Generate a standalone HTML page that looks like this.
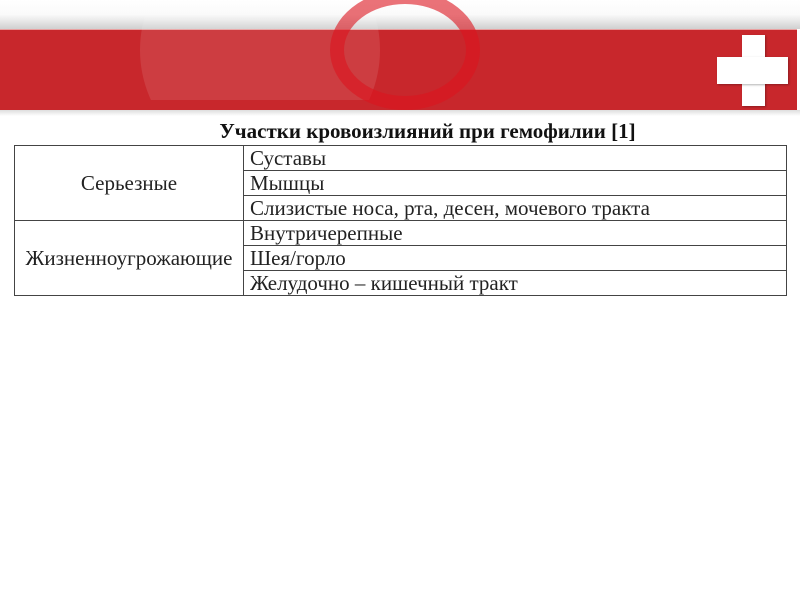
<!DOCTYPE html>
<html><head><meta charset="utf-8"><style>
body{margin:0;width:800px;height:600px;background:#fff;position:relative;overflow:hidden;font-family:"Liberation Serif",serif;}
.top{position:absolute;left:0;top:0;width:800px;height:29px;background:linear-gradient(#fff 0,#fafafa 50%,#d0d0d0 100%);}
.band{position:absolute;left:0;top:29px;width:797px;height:81px;background:#c8272c;border-top:1px solid #e9a0a0;}
.shade{position:absolute;left:0;top:110px;width:800px;height:6px;background:linear-gradient(#ddd,#fff);}
.gauge{position:absolute;left:140px;top:-70px;width:240px;height:240px;border-radius:50%;background:rgba(255,255,255,0.1);clip-path:inset(0 0 70px 0);}
.ring{position:absolute;left:330px;top:-10px;width:150px;height:120px;border-radius:50%;border:14px solid rgba(220,20,30,0.6);box-sizing:border-box;}
.cv{position:absolute;left:742px;top:35px;width:23px;height:71px;background:#fff;box-shadow:1px 1px 2px rgba(0,0,0,.3);}
.ch{position:absolute;left:717px;top:57px;width:71px;height:27px;background:#fff;box-shadow:1px 1px 2px rgba(0,0,0,.3);}
.title{position:absolute;left:0;width:855px;top:119px;text-align:center;font-weight:bold;font-size:21px;color:#111;white-space:nowrap;}
table{position:absolute;left:14px;top:145px;width:773px;border-collapse:collapse;font-size:21px;color:#222;}
td{border:1px solid #444;height:24px;padding:0 0 0 6px;line-height:20px;white-space:nowrap;}
td.l{width:228px;text-align:center;padding:0;}
</style></head><body>
<div class="top"></div>
<div class="band"></div>
<div class="gauge"></div>
<div class="ring"></div>
<div class="shade"></div>
<div class="cv"></div><div class="ch"></div>
<div class="title">Участки кровоизлияний при гемофилии [1]</div>
<table>
<tr><td class="l" rowspan="3">Серьезные</td><td>Суставы</td></tr>
<tr><td>Мышцы</td></tr>
<tr><td>Слизистые носа, рта, десен, мочевого тракта</td></tr>
<tr><td class="l" rowspan="3">Жизненноугрожающие</td><td>Внутричерепные</td></tr>
<tr><td>Шея/горло</td></tr>
<tr><td>Желудочно – кишечный тракт</td></tr>
</table>
</body></html>
